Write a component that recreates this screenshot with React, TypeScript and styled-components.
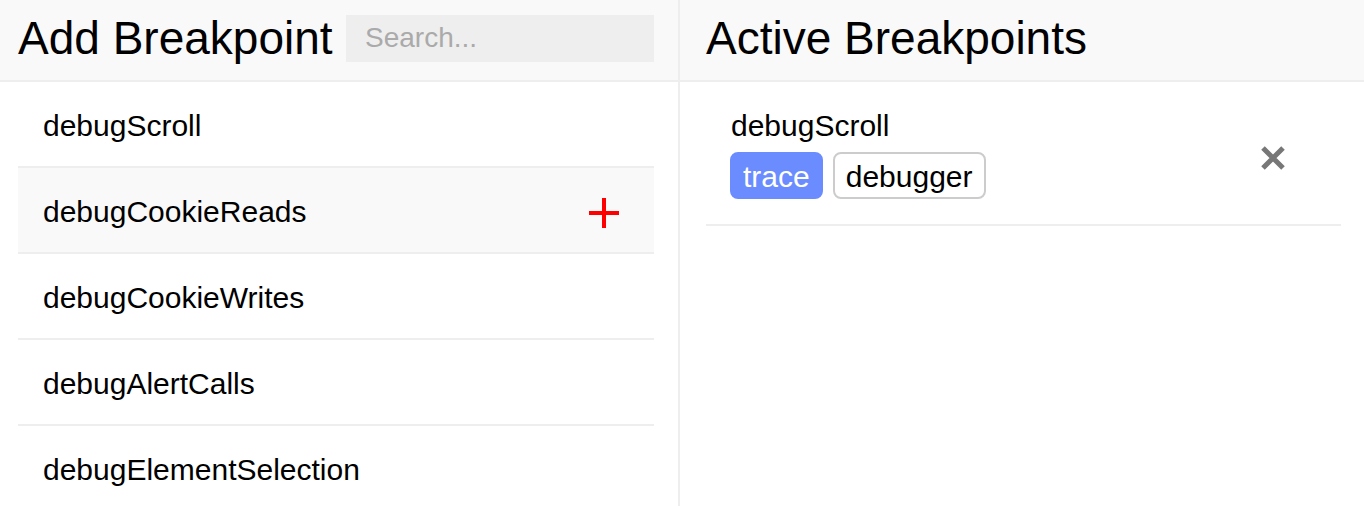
import React, { useState } from 'react'
import styled, { createGlobalStyle } from 'styled-components'

const GlobalStyle = createGlobalStyle`
  html, body {
    margin: 0;
    padding: 0;
    background: #fff;
    font-family: "Liberation Sans", Arial, Helvetica, sans-serif;
    color: #000;
  }
  * { box-sizing: border-box; }
`

const available = [
  'debugScroll',
  'debugCookieReads',
  'debugCookieWrites',
  'debugAlertCalls',
  'debugElementSelection',
]

interface ActiveBreakpoint {
  name: string
  traceOnly: boolean
}

const PlusIcon = () => (
  <svg width="32" height="32" viewBox="0 0 32 32">
    <path d="M16 1 V31 M1 16 H31" stroke="#ff0000" strokeWidth="4" fill="none" />
  </svg>
)

const CloseIcon = () => (
  <svg width="24" height="24" viewBox="0 0 24 24">
    <path d="M2 2 L22 22 M22 2 L2 22" stroke="#777" strokeWidth="5" fill="none" />
  </svg>
)

const App = () => {
  const [hovered, setHovered] = useState<string | null>('debugCookieReads')
  const [active, setActive] = useState<ActiveBreakpoint[]>([
    { name: 'debugScroll', traceOnly: true },
  ])

  return (
    <>
      <GlobalStyle />
      <Page>
        <Panel $divider>
          <Header $padRight={24} $padLeft={18}>
            <Title>Add Breakpoint</Title>
            <SearchInput placeholder="Search..." />
          </Header>
          <List $padRight={24} $padLeft={18}>
            {available.map((name) => (
              <Row
                key={name}
                $hover={hovered === name}
                onMouseEnter={() => setHovered(name)}
              >
                <RowName>{name}</RowName>
                {hovered === name && (
                  <AddButton
                    onClick={() =>
                      setActive((a) =>
                        a.some((b) => b.name === name) ? a : [...a, { name, traceOnly: true }]
                      )
                    }
                  >
                    <PlusIcon />
                  </AddButton>
                )}
              </Row>
            ))}
          </List>
        </Panel>

        <Panel>
          <Header $padRight={23} $padLeft={26}>
            <Title>Active Breakpoints</Title>
          </Header>
          <List $padRight={23} $padLeft={26}>
            {active.map((bp) => (
              <ActiveRow key={bp.name}>
                <ActiveInfo>
                  <ActiveName>{bp.name}</ActiveName>
                  <TagRow>
                    <Tag
                      $selected={bp.traceOnly}
                      onClick={() =>
                        setActive((a) => a.map((b) => (b.name === bp.name ? { ...b, traceOnly: true } : b)))
                      }
                    >
                      trace
                    </Tag>
                    <Tag
                      $selected={!bp.traceOnly}
                      onClick={() =>
                        setActive((a) => a.map((b) => (b.name === bp.name ? { ...b, traceOnly: false } : b)))
                      }
                    >
                      debugger
                    </Tag>
                  </TagRow>
                </ActiveInfo>
                <RemoveButton onClick={() => setActive((a) => a.filter((b) => b.name !== bp.name))}>
                  <CloseIcon />
                </RemoveButton>
              </ActiveRow>
            ))}
          </List>
        </Panel>
      </Page>
    </>
  )
}

const Page = styled.div`
  display: grid;
  grid-template-columns: 680px 1fr;
  height: 506px;
  overflow: hidden;
`

const Panel = styled.div<{ $divider?: boolean }>`
  display: flex;
  flex-direction: column;
  border-right: ${(p) => (p.$divider ? '2px solid #eee' : 'none')};
  min-width: 0;
`

const Header = styled.div<{ $padLeft: number; $padRight: number }>`
  display: flex;
  align-items: center;
  height: 82px;
  padding: 0 ${(p) => p.$padRight}px 4px ${(p) => p.$padLeft}px;
  background: #f9f9f9;
  border-bottom: 2px solid #eee;
  flex-shrink: 0;
`

const Title = styled.h1`
  margin: 0;
  font-size: 46px;
  font-weight: normal;
  line-height: 52px;
  white-space: nowrap;
`

const SearchInput = styled.input`
  margin-left: auto;
  width: 308px;
  height: 47px;
  border: none;
  outline: none;
  background: #eee;
  padding: 0 19px;
  font-family: "Liberation Sans", Arial, sans-serif;
  font-size: 28px;
  color: #000;

  &::placeholder {
    color: #aaa;
  }
`

const List = styled.div<{ $padLeft: number; $padRight: number }>`
  display: flex;
  flex-direction: column;
  padding: 0 ${(p) => p.$padRight}px 0 ${(p) => p.$padLeft}px;
`

const Row = styled.div<{ $hover: boolean }>`
  display: flex;
  align-items: center;
  height: 86px;
  padding: 3px 34px 0 25px;
  border-bottom: 2px solid #eee;
  background: ${(p) => (p.$hover ? '#f9f9f9' : 'transparent')};
  cursor: pointer;
`

const RowName = styled.span`
  flex: 1;
  font-size: 30px;
`

const AddButton = styled.button`
  display: flex;
  border: none;
  background: none;
  padding: 0;
  cursor: pointer;
  margin-top: 2px;
`

const ActiveRow = styled.div`
  display: flex;
  align-items: center;
  padding: 26px 56px 25px 25px;
  border-bottom: 2px solid #eee;
`

const ActiveInfo = styled.div`
  flex: 1;
  display: flex;
  flex-direction: column;
  gap: 8px;
`

const ActiveName = styled.div`
  font-size: 30px;
  line-height: 36px;
`

const TagRow = styled.div`
  display: flex;
  gap: 10px;
  margin-left: -1px;
`

const Tag = styled.span<{ $selected: boolean }>`
  display: inline-flex;
  align-items: center;
  height: 47px;
  padding: 2px 11px 0;
  border-radius: 8px;
  border: 2px solid ${(p) => (p.$selected ? '#6b8cff' : '#ccc')};
  background: ${(p) => (p.$selected ? '#6b8cff' : '#fff')};
  color: ${(p) => (p.$selected ? '#fff' : '#000')};
  font-size: 30px;
  cursor: pointer;
`

const RemoveButton = styled.button`
  display: flex;
  border: none;
  background: none;
  padding: 0;
  margin-top: 8px;
  cursor: pointer;
`

export default App
